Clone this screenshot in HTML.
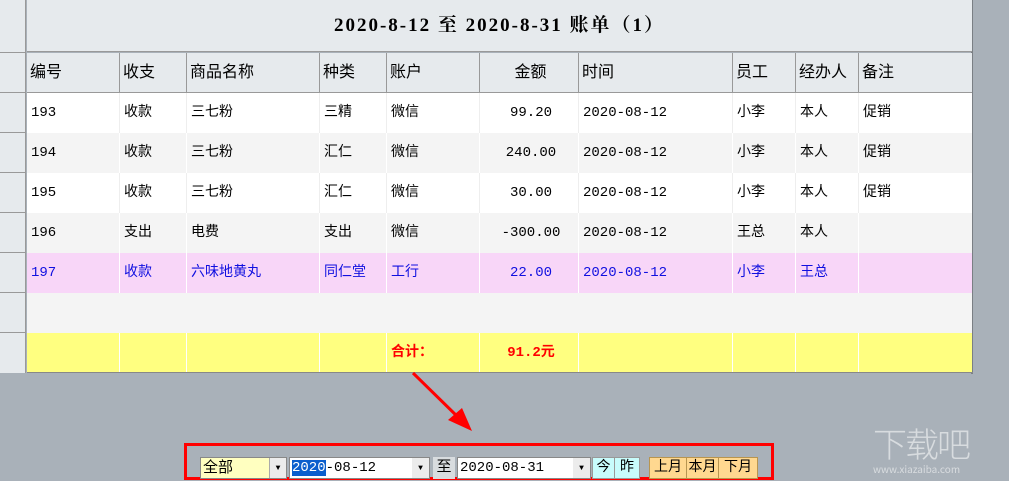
<!DOCTYPE html>
<html><head><meta charset="utf-8"><style>
*{margin:0;padding:0;box-sizing:border-box}
body{width:1009px;height:481px;overflow:hidden;background:#a9b1b9;position:relative;font-family:"Liberation Mono","Noto Sans CJK SC",monospace;font-size:14px;color:#000}
.a{position:absolute}
.gut{left:0;top:0;width:26px;height:373px;background:#e6eaed;border-right:1px solid #999}
.title{left:27px;top:0;width:945px;height:52px;background:#e6eaed;border-bottom:1px solid #999;text-align:center;line-height:52px;font-family:"Liberation Serif","Noto Serif CJK SC",serif;font-weight:bold;font-size:19px;letter-spacing:2px}
.row{position:absolute;left:27px;width:945px;height:40px}
.c{position:absolute;top:0;height:40px;line-height:40px;padding-left:4px;border-right:1px solid #fff;white-space:nowrap}
.hdr .c{border-right:1px solid #999;padding-left:3px;font-size:16px}
.gl{position:absolute;left:0;width:26px;border-bottom:1px solid #999}
.ctl{position:absolute;top:457px;height:22px;line-height:21px;font-size:14px}
</style></head><body>
<div class="a gut"></div>
<div class="gl" style="top:52px"></div>
<div class="gl" style="top:92px"></div>
<div class="gl" style="top:132px"></div>
<div class="gl" style="top:172px"></div>
<div class="gl" style="top:212px"></div>
<div class="gl" style="top:252px"></div>
<div class="gl" style="top:292px"></div>
<div class="gl" style="top:332px"></div>
<div class="a" style="left:971px;top:0;width:2px;height:374px;background:#7a7f84"></div>
<div class="a title">2020-8-12 至 2020-8-31 账单（1）</div>

<div class="row hdr" style="top:53px;background:#e6eaed;border-bottom:1px solid #999">
<div class="c" style="left:0;width:93px">编号</div><div class="c" style="left:93px;width:67px">收支</div><div class="c" style="left:160px;width:133px">商品名称</div><div class="c" style="left:293px;width:67px">种类</div><div class="c" style="left:360px;width:93px">账户</div><div class="c" style="left:453px;width:99px;text-align:center">金额</div><div class="c" style="left:552px;width:154px">时间</div><div class="c" style="left:706px;width:63px">员工</div><div class="c" style="left:769px;width:63px">经办人</div><div class="c" style="left:832px;width:113px;border-right:none">备注</div>
</div>

<div class="row" style="top:93px;background:#fff">
<div class="c" style="left:0;width:93px;border-color:#eee">193</div><div class="c" style="left:93px;width:67px;border-color:#eee">收款</div><div class="c" style="left:160px;width:133px;border-color:#eee">三七粉</div><div class="c" style="left:293px;width:67px;border-color:#eee">三精</div><div class="c" style="left:360px;width:93px;border-color:#eee">微信</div><div class="c" style="left:453px;width:99px;text-align:center;border-color:#eee">99.20</div><div class="c" style="left:552px;width:154px;border-color:#eee">2020-08-12</div><div class="c" style="left:706px;width:63px;border-color:#eee">小李</div><div class="c" style="left:769px;width:63px;border-color:#eee">本人</div><div class="c" style="left:832px;width:113px;border:none">促销</div>
</div>
<div class="row" style="top:133px;background:#f4f4f4">
<div class="c" style="left:0;width:93px">194</div><div class="c" style="left:93px;width:67px">收款</div><div class="c" style="left:160px;width:133px">三七粉</div><div class="c" style="left:293px;width:67px">汇仁</div><div class="c" style="left:360px;width:93px">微信</div><div class="c" style="left:453px;width:99px;text-align:center">240.00</div><div class="c" style="left:552px;width:154px">2020-08-12</div><div class="c" style="left:706px;width:63px">小李</div><div class="c" style="left:769px;width:63px">本人</div><div class="c" style="left:832px;width:113px;border:none">促销</div>
</div>
<div class="row" style="top:173px;background:#fff">
<div class="c" style="left:0;width:93px;border-color:#eee">195</div><div class="c" style="left:93px;width:67px;border-color:#eee">收款</div><div class="c" style="left:160px;width:133px;border-color:#eee">三七粉</div><div class="c" style="left:293px;width:67px;border-color:#eee">汇仁</div><div class="c" style="left:360px;width:93px;border-color:#eee">微信</div><div class="c" style="left:453px;width:99px;text-align:center;border-color:#eee">30.00</div><div class="c" style="left:552px;width:154px;border-color:#eee">2020-08-12</div><div class="c" style="left:706px;width:63px;border-color:#eee">小李</div><div class="c" style="left:769px;width:63px;border-color:#eee">本人</div><div class="c" style="left:832px;width:113px;border:none">促销</div>
</div>
<div class="row" style="top:213px;background:#f4f4f4">
<div class="c" style="left:0;width:93px">196</div><div class="c" style="left:93px;width:67px">支出</div><div class="c" style="left:160px;width:133px">电费</div><div class="c" style="left:293px;width:67px">支出</div><div class="c" style="left:360px;width:93px">微信</div><div class="c" style="left:453px;width:99px;text-align:center">-300.00</div><div class="c" style="left:552px;width:154px">2020-08-12</div><div class="c" style="left:706px;width:63px">王总</div><div class="c" style="left:769px;width:63px">本人</div><div class="c" style="left:832px;width:113px;border:none"></div>
</div>
<div class="row" style="top:253px;background:#f8d6f8;color:#1010e0">
<div class="c" style="left:0;width:93px">197</div><div class="c" style="left:93px;width:67px">收款</div><div class="c" style="left:160px;width:133px">六味地黄丸</div><div class="c" style="left:293px;width:67px">同仁堂</div><div class="c" style="left:360px;width:93px">工行</div><div class="c" style="left:453px;width:99px;text-align:center">22.00</div><div class="c" style="left:552px;width:154px">2020-08-12</div><div class="c" style="left:706px;width:63px">小李</div><div class="c" style="left:769px;width:63px">王总</div><div class="c" style="left:832px;width:113px;border:none"></div>
</div>
<div class="row" style="top:293px;background:#f4f4f4"></div>
<div class="row" style="top:333px;background:#ffff80;color:#f00;font-weight:bold">
<div class="c" style="left:0;width:93px"></div><div class="c" style="left:93px;width:67px"></div><div class="c" style="left:160px;width:133px"></div><div class="c" style="left:293px;width:67px"></div><div class="c" style="left:360px;width:93px">合计：</div><div class="c" style="left:453px;width:99px;text-align:center">91.2元</div><div class="c" style="left:552px;width:154px"></div><div class="c" style="left:706px;width:63px"></div><div class="c" style="left:769px;width:63px"></div><div class="c" style="left:832px;width:113px;border:none"></div>
</div>
<div class="a" style="left:27px;top:372px;width:946px;height:1px;background:#888"></div>

<svg class="a" style="left:0;top:0" width="1009" height="481">
<line x1="413" y1="373" x2="462" y2="421" stroke="#f00" stroke-width="3"/>
<polygon points="472,431 448,420 462,408" fill="#f00"/>
<rect x="185.5" y="444.5" width="587" height="34" fill="none" stroke="#f00" stroke-width="3"/>
</svg>

<div class="ctl" style="left:200px;width:87px;background:#ffffc0;border:1px solid #888;padding-left:2px;font-size:15px">全部<span class="a" style="right:0;top:0;width:17px;height:20px;background:#ececec;border-left:1px solid #aaa;font-size:8px;text-align:center">▼</span></div>
<div class="ctl" style="left:289px;width:141px;background:#fff;border:1px solid #888;padding-left:2px"><span style="background:#0a5ecd;color:#fff">2020</span>-08-12<span class="a" style="right:0;top:0;width:17px;height:20px;background:#ececec;font-size:8px;text-align:center">▼</span></div>
<div class="ctl" style="left:433px;width:22px;background:#d8dcdf;text-align:center;font-size:15px">至</div>
<div class="ctl" style="left:457px;width:134px;background:#fff;border:1px solid #888;padding-left:2px">2020-08-31<span class="a" style="right:0;top:0;width:17px;height:20px;background:#ececec;font-size:8px;text-align:center">▼</span></div>
<div class="ctl" style="left:592px;width:23px;background:#c8fcfc;border:1px solid #999;text-align:center">今</div>
<div class="ctl" style="left:614px;width:26px;background:#c8fcfc;border:1px solid #999;text-align:center">昨</div>
<div class="ctl" style="left:649px;width:38px;background:#ffd890;border:1px solid #b89550;text-align:center">上月</div>
<div class="ctl" style="left:686px;width:33px;background:#ffd890;border:1px solid #b89550;text-align:center">本月</div>
<div class="ctl" style="left:718px;width:40px;background:#ffd890;border:1px solid #b89550;text-align:center">下月</div>
<div class="a" style="left:873px;top:423px;width:136px;height:58px;color:rgba(255,255,255,0.55);font-family:'Noto Sans CJK SC',sans-serif;font-size:34px;font-weight:300;letter-spacing:-2px;line-height:40px">下载吧<div style="font-size:10px;line-height:12px;letter-spacing:0;font-weight:normal">www.xiazaiba.com</div></div>
</body></html>
